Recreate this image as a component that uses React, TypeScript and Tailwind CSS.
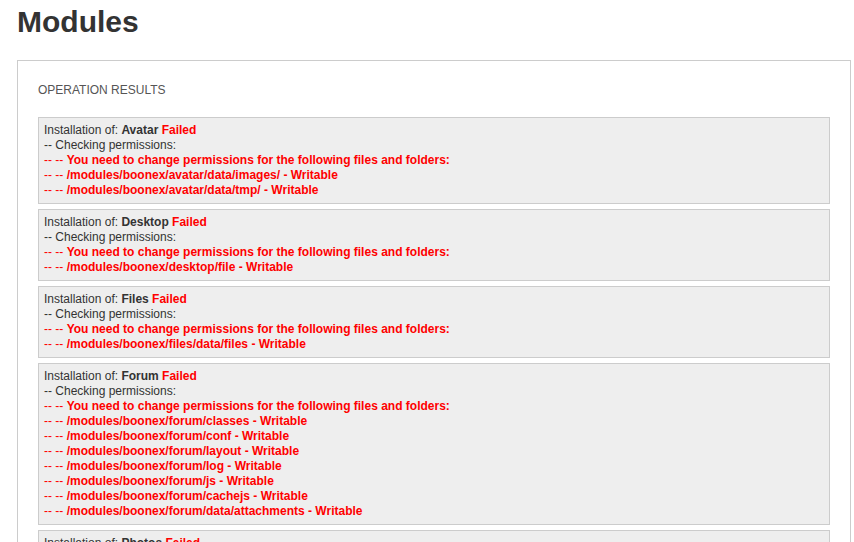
// App.tsx
const modules = [
  {
    name: "Avatar",
    paths: ["/modules/boonex/avatar/data/images/", "/modules/boonex/avatar/data/tmp/"],
  },
  {
    name: "Desktop",
    paths: ["/modules/boonex/desktop/file"],
  },
  {
    name: "Files",
    paths: ["/modules/boonex/files/data/files"],
  },
  {
    name: "Forum",
    paths: [
      "/modules/boonex/forum/classes",
      "/modules/boonex/forum/conf",
      "/modules/boonex/forum/layout",
      "/modules/boonex/forum/log",
      "/modules/boonex/forum/js",
      "/modules/boonex/forum/cachejs",
      "/modules/boonex/forum/data/attachments",
    ],
  },
  {
    name: "Photos",
    paths: ["/modules/boonex/photos/data/files"],
  },
];

function ResultCard({ name, paths }: { name: string; paths: string[] }) {
  return (
    <div className="mb-[5px] border border-[#cccccc] bg-[#eeeeee] px-[5px] py-[5px] text-[12px] leading-[15px] text-[#333333]">
      <div>
        Installation of: <b>{name}</b> <b className="text-[#ff0000]">Failed</b>
      </div>
      <div>-- Checking permissions:</div>
      <div className="text-[#ff0000]">
        -- -- <b>You need to change permissions for the following files and folders:</b>
      </div>
      {paths.map((p) => (
        <div key={p} className="text-[#ff0000]">
          -- -- <b>{p} - Writable</b>
        </div>
      ))}
    </div>
  );
}

export default function App() {
  return (
    <div className="min-h-screen bg-white font-['Liberation_Sans',Arial,sans-serif]">
      <h1 className="ml-[17px] pt-[4px] text-[30px] font-bold leading-[36px] text-[#333333]">Modules</h1>

      {/* Operation results box */}
      <div className="mt-[20px] ml-[17px] w-[834px] border border-[#cccccc] px-[20px] pt-[21px] pb-[20px]">
        <div className="mb-[19px] text-[12px] uppercase leading-[16px] text-[#555555]">Operation results</div>
        {modules.map((m) => (
          <ResultCard key={m.name} name={m.name} paths={m.paths} />
        ))}
      </div>
    </div>
  );
}
